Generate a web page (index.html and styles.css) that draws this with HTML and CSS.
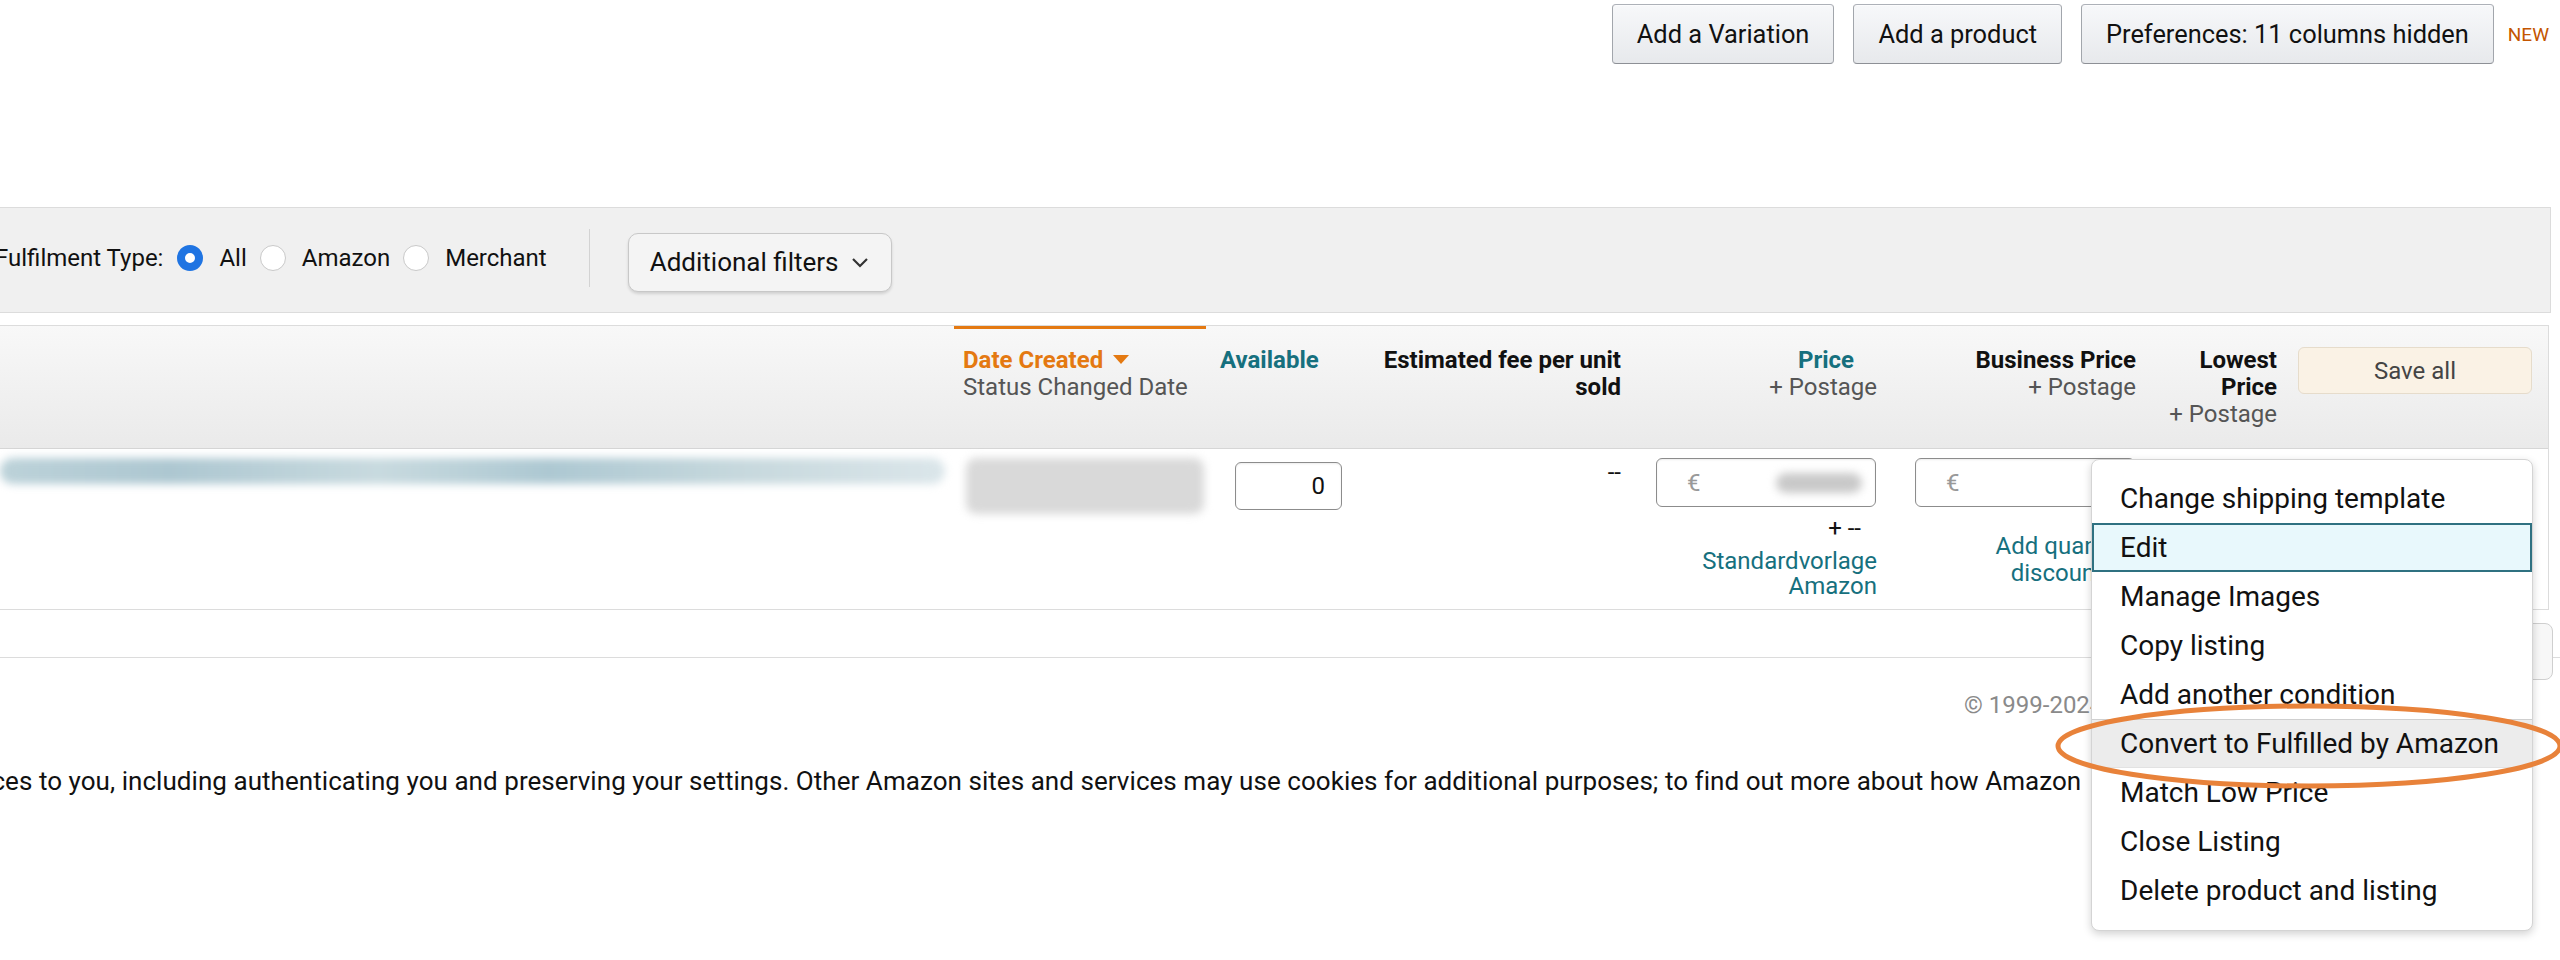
FILE: index.html
```html
<!DOCTYPE html>
<html lang="en">
<head>
<meta charset="UTF-8">
<title>Manage Inventory</title>
<link rel="stylesheet" href="styles.css">
</head>
<body>
<div class="page">

  <div class="toolbar">
    <button class="btn">Add a Variation</button>
    <button class="btn">Add a product</button>
    <button class="btn">Preferences: 11 columns hidden</button>
    <span class="new-tag">NEW</span>
  </div>

  <div class="filters">
    <span class="filter-label">Fulfilment Type:</span>
    <label class="radio"><span class="dot checked"></span>All</label>
    <label class="radio"><span class="dot"></span>Amazon</label>
    <label class="radio"><span class="dot"></span>Merchant</label>
    <span class="divider"></span>
    <button class="btn-filter">Additional filters
      <svg class="chev" width="18" height="11" viewBox="0 0 18 11"><polyline points="2,2 9,9 16,2" fill="none" stroke="#333" stroke-width="2.2"/></svg>
    </button>
  </div>

  <div class="inventory">
    <div class="thead">
      <div class="col c-product"></div>
      <div class="col c-date sorted">
        <div class="th-sort">Date Created <span class="caret"></span></div>
        <div class="th-sub">Status Changed Date</div>
      </div>
      <div class="col c-avail"><div class="th-link">Available</div></div>
      <div class="col c-fee right"><div class="th">Estimated fee per unit sold</div></div>
      <div class="col c-price right">
        <div class="th-link price-title">Price</div>
        <div class="th-sub">+ Postage</div>
      </div>
      <div class="col c-biz right">
        <div class="th">Business Price</div>
        <div class="th-sub">+ Postage</div>
      </div>
      <div class="col c-low right">
        <div class="th">Lowest<br>Price</div>
        <div class="th-sub">+&nbsp;Postage</div>
      </div>
      <div class="col c-act"><button class="btn-save">Save all</button></div>
    </div>

    <div class="trow">
      <div class="col c-product"><div class="redact-name"></div></div>
      <div class="col c-date"><div class="redact-date"></div></div>
      <div class="col c-avail"><div class="field qty">0</div></div>
      <div class="col c-fee right"><div class="dash">--</div></div>
      <div class="col c-price">
        <div class="field money"><span class="cur">€</span><span class="redact-price"></span></div>
        <div class="postage">+ --</div>
        <a class="cell-link right">Standardvorlage<br>Amazon</a>
      </div>
      <div class="col c-biz">
        <div class="field money"><span class="cur">€</span></div>
        <a class="cell-link qd">Add quantity<br>discounts</a>
      </div>
      <div class="col c-low"></div>
      <div class="col c-act"></div>
    </div>
  </div>

  <div class="table-foot">
    <button class="pager">Next ›</button>
  </div>

  <div class="copyright">© 1999-2024, Amazon.com, Inc. or its affiliates</div>
  <p class="cookies">services to you, including authenticating you and preserving your settings. Other Amazon sites and services may use cookies for additional purposes; to find out more about how Amazon</p>

  <ul class="menu">
    <li>Change shipping template</li>
    <li class="focused">Edit</li>
    <li>Manage Images</li>
    <li>Copy listing</li>
    <li>Add another condition</li>
    <li class="hover">Convert to Fulfilled by Amazon</li>
    <li>Match Low Price</li>
    <li>Close Listing</li>
    <li>Delete product and listing</li>
  </ul>

  <svg class="ring" width="508" height="92" viewBox="0 0 508 92">
    <ellipse cx="257" cy="46" rx="251" ry="40" fill="none" stroke="#e8823a" stroke-width="5"/>
  </svg>

</div>
</body>
</html>
```

FILE: styles.css
```css
html, body {
  margin: 0;
  overflow: hidden;
  background: #fff;
}

body {
  font-family: Roboto, "Liberation Sans", Arial, sans-serif;
  font-size: 24px;
  color: #111;
}

.page {
  position: relative;
  width: 2560px;
  height: 960px;
}

button {
  font-family: inherit;
  color: #111;
  cursor: pointer;
}

/* top buttons */
.toolbar {
  display: flex;
  justify-content: flex-end;
  align-items: center;
  gap: 19px;
  padding: 4px 11px 0 0;
}

.btn {
  height: 60px;
  padding: 0 24px;
  font-size: 25.4px;
  background: linear-gradient(#f7f8fa, #e7e9ec);
  border: 1px solid #adb1b8;
  border-color: #adb1b8 #a2a6ac #8d9096;
  border-radius: 4px;
  box-shadow: inset 0 1px 0 rgba(255,255,255,.6);
}

.new-tag {
  margin-left: -5px;
  font-size: 19px;
  color: #c45500;
}

/* filter bar */
.filters {
  box-sizing: border-box;
  display: flex;
  align-items: center;
  width: 2551px;
  height: 106px;
  margin-top: 143px;
  padding-bottom: 4px;
  background: #f0f0f0;
  border: 1px solid #dcdcdc;
  border-left: 0;
}

.filter-label {
  margin-left: -5px;
  margin-right: 14px;
}

.radio {
  display: flex;
  align-items: center;
  gap: 16px;
  margin-right: 13px;
}

.dot {
  box-sizing: border-box;
  width: 26px;
  height: 26px;
  border-radius: 50%;
  background: #fff;
  border: 1px solid #c9c9c9;
}

.dot.checked {
  border: 8px solid #1f74e2;
}

.divider {
  width: 1px;
  height: 58px;
  margin: 0 38px 0 29px;
  background: #d3d3d3;
}

.btn-filter {
  display: flex;
  align-items: center;
  gap: 12px;
  height: 59px;
  margin-top: 8px;
  padding: 0 22px 0 21px;
  font-size: 26px;
  background: #f4f4f4;
  border: 1px solid #c8c8c8;
  border-radius: 10px;
  box-shadow: 0 2px 3px rgba(0,0,0,.13);
}

/* inventory table */
.inventory {
  width: 2548px;
  margin-top: 12px;
  border-top: 1px solid #dcdcdc;
  border-right: 1px solid #dcdcdc;
}

.thead,
.trow {
  box-sizing: border-box;
  display: flex;
}

.thead {
  height: 123px;
  background: linear-gradient(#f8f8f8, #eaeaea);
  border-bottom: 1px solid #d6d6d6;
}

.thead .col {
  padding-top: 21px;
  line-height: 27px;
  font-weight: 700;
}

.trow {
  height: 161px;
  padding-top: 8px;
  border-bottom: 1px solid #dcdcdc;
}

.col {
  box-sizing: border-box;
  flex: none;
}

.right { text-align: right; }

.c-product { width: 954px; }
.c-date    { width: 252px; padding-left: 9px; }
.c-avail   { width: 139px; padding-left: 14px; }
.c-fee     { width: 285px; padding-right: 9px; }
.c-price   { width: 256px; padding-right: 9px; }
.c-biz     { width: 259px; padding-right: 9px; }
.c-low     { width: 141px; padding-right: 9px; }
.c-act     { width: 262px; padding-left: 12px; }

.thead .c-fee { padding-left: 28px; }

.sorted {
  box-shadow: inset 0 3px 0 #e47911;
}

.th-sort { color: #e47911; }

.caret {
  display: inline-block;
  margin-left: 4px;
  vertical-align: 4px;
  border-left: 8px solid transparent;
  border-right: 8px solid transparent;
  border-top: 9px solid #e47911;
}

.th-link { color: #16707e; }

.price-title { margin-right: 23px; }

.th-sub {
  font-weight: 400;
  color: #555;
}

.btn-save {
  width: 234px;
  height: 47px;
  font-size: 24px;
  color: #444;
  background: #faf2e5;
  border: 1px solid #e6dccb;
  border-radius: 6px;
}

/* data row */
.redact-name {
  height: 26px;
  margin-top: 1px;
  width: 945px;
  border-radius: 14px;
  background: linear-gradient(90deg, #bcd2d9, #adc7d1 18%, #c8dadf 40%, #adc8d2 58%, #c6d8dd 78%, #dbe6ea);
  filter: blur(4px);
}

.redact-date {
  width: 238px;
  height: 56px;
  margin: 1px 0 0 3px;
  border-radius: 10px;
  background: #d9d9d9;
  filter: blur(4px);
}

.field {
  box-sizing: border-box;
  display: flex;
  align-items: center;
  background: #fff;
  border: 1px solid #8c8c8c;
  border-radius: 6px;
  box-shadow: inset 0 1px 2px rgba(0,0,0,.08);
}

.qty {
  justify-content: flex-end;
  width: 107px;
  height: 48px;
  margin: 5px 0 0 15px;
  padding-right: 16px;
}

.money {
  width: 220px;
  height: 49px;
  margin: 1px 0 0 26px;
  padding-left: 30px;
}

.c-biz .money { margin-left: 29px; }

.cur { color: #999; }

.redact-price {
  width: 86px;
  height: 20px;
  margin: 0 13px 0 auto;
  border-radius: 10px;
  background: #c9c9c9;
  filter: blur(4px);
}

.dash {
  line-height: 30px;
}

.postage {
  margin-top: 9px;
  padding-right: 16px;
  line-height: 25px;
  text-align: right;
}

.cell-link {
  display: block;
  margin-top: 8px;
  line-height: 25px;
  color: #16707e;
}

.cell-link.qd {
  margin-top: 26px;
  padding-left: 104px;
  line-height: 27px;
  text-align: center;
}

.table-foot {
  box-sizing: border-box;
  display: flex;
  justify-content: flex-end;
  height: 48px;
  padding-right: 7px;
  border-bottom: 1px solid #dcdcdc;
}

.pager {
  flex: none;
  width: 120px;
  height: 57px;
  margin-top: 13px;
  font-size: 24px;
  text-align: right;
  padding-right: 22px;
  background: #f7f7f7;
  border: 1px solid #cfcfcf;
  border-radius: 8px;
}

/* page footer */
.copyright {
  margin-top: 32px;
  padding-left: 1964px;
  line-height: 30px;
  color: #8a8a8a;
  white-space: nowrap;
}

.cookies {
  margin: 45px 0 0 -64px;
  font-size: 26px;
  line-height: 32px;
  letter-spacing: 0.05px;
  white-space: nowrap;
}

/* row actions dropdown */
.menu {
  position: absolute;
  left: 2091px;
  top: 459px;
  box-sizing: border-box;
  width: 442px;
  height: 472px;
  margin: 0;
  padding: 14px 0 0;
  list-style: none;
  background: #fff;
  border: 1px solid #d4d4d4;
  border-radius: 8px;
  box-shadow: 0 3px 8px rgba(0,0,0,.18);
  font-size: 28px;
}

.menu li {
  box-sizing: border-box;
  height: 49px;
  padding-left: 28px;
  line-height: 49px;
  white-space: nowrap;
}

.menu li.focused {
  line-height: 45px;
  padding-left: 26px;
  background: #e8f8fc;
  border: 2px solid #2f7181;
}

.menu li.hover {
  line-height: 47px;
  background: #ececec;
  border-top: 1px solid #cfcfcf;
  border-bottom: 1px solid #e2e2e2;
}

.ring {
  position: absolute;
  left: 2052px;
  top: 700px;
}
```
